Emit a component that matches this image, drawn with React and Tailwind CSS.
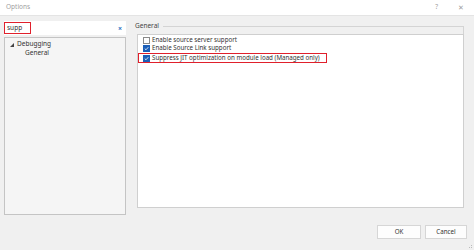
import React from "react";

function Check({ checked }) {
  return checked ? (
    <span className="w-[7px] h-[7px] bg-[#1c5fb8] flex items-center justify-center shrink-0">
      <svg width="5" height="5" viewBox="0 0 10 10">
        <path d="M1.5 5.2 L4 7.6 L8.6 2.4" fill="none" stroke="white" strokeWidth="1.6" />
      </svg>
    </span>
  ) : (
    <span className="w-[7px] h-[7px] border border-[#8a8a8a] bg-white shrink-0" />
  );
}

export default function App() {
  const font = { fontFamily: '"Noto Sans", "Open Sans", sans-serif' };
  return (
    <div className="w-[474px] h-[250px] bg-[#f0f0f0] flex flex-col text-[#333333] text-[6.2px] leading-none overflow-hidden relative whitespace-nowrap" style={font}>
      {/* title bar */}
      <div className="h-[16px] bg-white flex items-center shrink-0 border-b border-[#e4e4e4]">
        <span className="ml-[6px] text-[#a0a0a0] text-[6.5px]">Options</span>
        <span className="ml-auto text-[#a0a0a0] text-[6.5px] mr-[20px]">?</span>
        <span className="text-[#a0a0a0] text-[7px] mr-[10px]">✕</span>
      </div>
      <div className="flex flex-1 min-h-0">
        {/* left column */}
        <div className="w-[122px] ml-[4px] flex flex-col">
          <div className="mt-[5px] h-[14px] bg-white flex items-center relative">
            <div className="h-[12px] w-[27px] border border-[#e0202c] flex items-center pl-[2px] text-[6.5px]">supp</div>
            <span className="ml-auto mr-[4px] text-[#2a6fc0] text-[7px] font-bold">×</span>
          </div>
          <div className="mt-[2px] h-[178px] bg-[#f5f5f5] border border-[#c4c4c4] flex flex-col pt-[2px]">
            <div className="flex items-center h-[9px]">
              <svg width="4" height="4" viewBox="0 0 4 4" className="ml-[5px] mr-[3px]">
                <path d="M4 0 L4 4 L0 4 Z" fill="#444" />
              </svg>
              <span className="text-[6.5px]">Debugging</span>
            </div>
            <div className="flex items-center h-[9px] pl-[20px] text-[6.5px]">General</div>
          </div>
        </div>
        {/* right column */}
        <div className="flex-1 ml-[8px] mr-[10px] flex flex-col">
          <div className="mt-[6px] flex items-center h-[8px] pl-[1px]">
            <span className="text-[#444] text-[6.5px]">General</span>
            <div className="flex-1 ml-[4px] h-[8px] mt-[8px] border-t border-r border-[#d4d4d4]" />
          </div>
          <div className="ml-[3px] mt-[4px] h-[174px] bg-white border border-[#cfcfcf] flex flex-col pt-[1px] pl-[4px]">
            <div className="flex items-center h-[8px] gap-[2px] ml-[1px]">
              <Check />
              <span>Enable source server support</span>
            </div>
            <div className="flex items-center h-[9px] gap-[2px] ml-[1px]">
              <Check checked />
              <span>Enable Source Link support</span>
            </div>
            <div className="-ml-[4px] w-[189px] h-[10px] border border-[#e0202c] flex items-center gap-[2px] pl-[4px]">
              <Check checked />
              <span>Suppress JIT optimization on module load (Managed only)</span>
            </div>
          </div>
          <div className="mt-[17px] flex justify-end gap-[4px] -mr-[3px]">
            <div className="w-[44px] h-[14px] bg-[#fdfdfd] border border-[#d6d6d6] flex items-center justify-center">OK</div>
            <div className="w-[42px] h-[14px] bg-[#fdfdfd] border border-[#d6d6d6] flex items-center justify-center">Cancel</div>
          </div>
        </div>
      </div>
      <svg className="absolute right-[1px] bottom-[1px]" width="6" height="6" viewBox="0 0 6 6">
        <rect x="4" y="4" width="1" height="1" fill="#bbb" />
        <rect x="2" y="4" width="1" height="1" fill="#bbb" />
        <rect x="4" y="2" width="1" height="1" fill="#bbb" />
      </svg>
    </div>
  );
}
